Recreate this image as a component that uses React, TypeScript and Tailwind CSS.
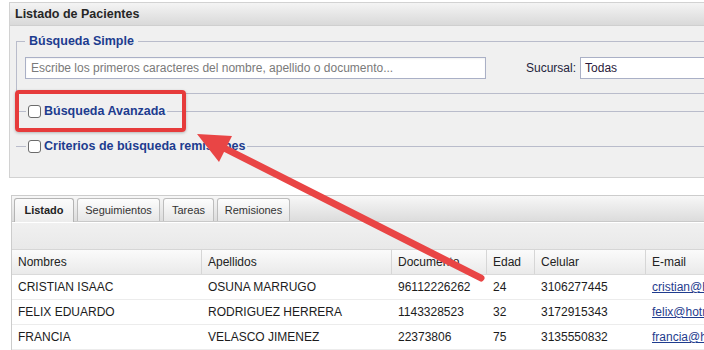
import React from 'react';

const rows = [
  ['CRISTIAN ISAAC', 'OSUNA MARRUGO', '96112226262', '24', '3106277445', 'cristian@hotmail.com'],
  ['FELIX EDUARDO', 'RODRIGUEZ HERRERA', '1143328523', '32', '3172915343', 'felix@hotmail.com'],
  ['FRANCIA', 'VELASCO JIMENEZ', '22373806', '75', '3135550832', 'francia@hotmail.com'],
];

const headers = ['Nombres', 'Apellidos', 'Documento', 'Edad', 'Celular', 'E-mail'];
const tabs = ['Listado', 'Seguimientos', 'Tareas', 'Remisiones'];

const Checkbox = () => (
  <span className="w-[13px] h-[13px] rounded-[3px] border border-[#6b6b6b] bg-white shrink-0" />
);

const CollapsedSet: React.FC<{ label: string; className?: string }> = ({ label, className }) => (
  <fieldset className={`border-t border-[#b9bccb] pl-[10px] ${className ?? ''}`}>
    <legend className="px-[2px] h-[16px] flex items-center gap-[3px]">
      <Checkbox />
      <span className="text-[12.5px] font-bold text-[#1d3c8f] leading-none">{label}</span>
    </legend>
  </fieldset>
);

export default function App() {
  return (
    <div className="relative w-[704px] h-[350px] overflow-hidden bg-white font-['Liberation_Sans',Arial,sans-serif]">
      {/* panel: search */}
      <div className="ml-[9px] mt-[2px] w-[720px] border border-[#d2d2d2]">
        <div className="h-[23px] flex items-center px-[5px] bg-gradient-to-b from-[#f4f4f4] to-[#d9d9d9] border-b border-[#cfcfcf]">
          <span className="text-[12.5px] font-bold text-[#262626]">Listado de Pacientes</span>
        </div>
        <div className="bg-[#f0f0f0] px-[6px] pt-[7px] pb-[23px]">
          <fieldset className="border border-r-0 border-[#b9bccb] pl-[8px] pt-[8px] pb-[14px]">
            <legend className="px-[4px] h-[16px] flex items-center">
              <span className="text-[12.5px] font-bold text-[#1d3c8f] leading-none">Búsqueda Simple</span>
            </legend>
            <div className="flex items-center">
              <div className="w-[461px] h-[22px] border border-[#aab0c6] bg-white flex items-center px-[5px] shadow-[inset_0_1px_2px_rgba(0,0,0,0.06)]">
                <span className="text-[12px] text-[#7a7a7a] whitespace-nowrap">
                  Escribe los primeros caracteres del nombre, apellido o documento...
                </span>
              </div>
              <span className="ml-[40px] text-[12px] text-[#24243c]">Sucursal:</span>
              <div className="ml-[4px] w-[200px] h-[22px] border border-[#aab0c6] bg-white flex items-center px-[4px]">
                <span className="text-[12px] text-[#2a1a3a]">Todas</span>
              </div>
            </div>
          </fieldset>
          <CollapsedSet label="Búsqueda Avanzada" className="mt-[9px]" />
          <CollapsedSet label="Criterios de búsqueda remisiones" className="mt-[19px]" />
        </div>
      </div>

      {/* panel: tabs + grid */}
      <div className="ml-[11px] mt-[17px] w-[720px] border-l border-t border-[#cccccc]">
        <div className="h-[26px] bg-gradient-to-b from-[#f7f7f7] to-[#dcdcdc] flex items-end pl-[2px] gap-[3px] border-b border-[#c9c9c9]">
          {tabs.map((t, i) => (
            <div
              key={t}
              className={
                i === 0
                  ? 'h-[24px] w-[60px] -mb-px flex items-center justify-center rounded-t-[3px] border border-b-0 border-[#b4b4b4] bg-gradient-to-b from-[#fbfbfb] to-[#ececec] text-[11px] font-bold text-[#222]'
                  : 'h-[23px] flex items-center justify-center rounded-t-[3px] border border-b-0 border-[#bdbdbd] bg-gradient-to-b from-[#fdfdfd] to-[#e6e6e6] text-[11px] text-[#333]'
              }
              style={i === 0 ? undefined : { width: [0, 83, 51, 73][i] }}
            >
              {t}
            </div>
          ))}
        </div>
        <div className="h-[28px] bg-gradient-to-b from-[#f0f0f0] to-[#e9e9e9] border-t border-white border-b border-b-[#d6d6d6]" />
        <div className="grid grid-cols-[190px_190px_95px_48px_111px_1fr] h-[25px] bg-gradient-to-b from-[#fbfbfb] to-[#eaeaea] border-b border-[#dadada]">
          {headers.map((h, i) => (
            <div
              key={h}
              className={`flex items-center px-[6px] text-[12px] text-[#222] ${i < 5 ? 'border-r border-[#d6d6d6]' : ''}`}
            >
              {h}
            </div>
          ))}
        </div>
        {rows.map((r) => (
          <div key={r[0]} className="grid grid-cols-[190px_190px_95px_48px_111px_1fr] h-[25px] bg-white border-b border-[#ececec]">
            {r.map((c, i) => (
              <div key={i} className="flex items-center px-[6px] text-[12px] text-[#1c1c1c] whitespace-nowrap">
                {i === 5 ? <span className="underline text-[#1f3c8e]">{c}</span> : c}
              </div>
            ))}
          </div>
        ))}
      </div>

      {/* annotation */}
      <div className="absolute left-[15px] top-[90px] w-[171px] h-[42px] rounded-[4px] border-[4px] border-[#e63b3b] shadow-[0_1px_3px_rgba(0,0,0,0.25)]" />
      <svg className="absolute left-0 top-0" width="704" height="350" viewBox="0 0 704 350">
        <line x1="481" y1="278" x2="222" y2="147" stroke="#e94545" strokeWidth="7" strokeLinecap="round" />
        <polygon points="197,134 232,136 219,162" fill="#e94545" />
      </svg>
    </div>
  );
}
